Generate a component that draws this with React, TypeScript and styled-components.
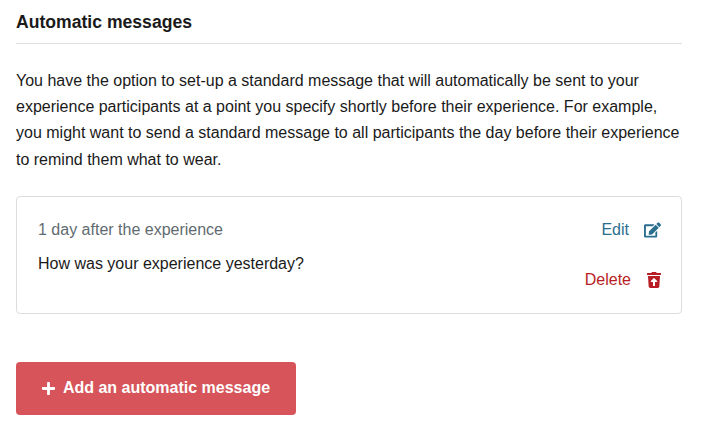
import React from "react";
import styled, { createGlobalStyle } from "styled-components";
import { FaEdit, FaTrashRestore, FaPlus } from "react-icons/fa";

const Global = createGlobalStyle`
  html, body { margin: 0; padding: 0; background: #fff; }
  body { font-family: "Liberation Sans", Arial, sans-serif; color: #1a1a1a; }
`;

const Page = styled.div`
  width: 666px;
  padding: 11px 20px 15px 16px;
`;

const Heading = styled.h2`
  margin: 0;
  padding-bottom: 10px;
  border-bottom: 1px solid #e0e0e0;
  font-size: 17.6px;
  line-height: 22px;
  font-weight: 700;
  color: #1a1a1a;
`;

const Intro = styled.p`
  margin: 23.5px 0 0;
  font-size: 16px;
  line-height: 26.4px;
  color: #1a1a1a;
`;

const Card = styled.div`
  margin-top: 22.5px;
  height: 118px;
  box-sizing: border-box;
  border: 1px solid #dcdcdc;
  border-radius: 4px;
  padding: 22px 20px 0 21px;
  display: flex;
  justify-content: space-between;
`;

const Body = styled.div`
  display: flex;
  flex-direction: column;
  gap: 12px;
  font-size: 16px;
  line-height: 22px;
`;

const Timing = styled.div`
  color: #5f6b70;
`;

const Actions = styled.div`
  display: flex;
  flex-direction: column;
  align-items: flex-end;
  gap: 28px;
`;

const Action = styled.a<{ $color: string }>`
  display: flex;
  align-items: center;
  gap: 16px;
  font-size: 16px;
  line-height: 22px;
  color: ${(p) => p.$color};
`;

const EditIcon = styled(FaEdit)`
  display: block;
  width: 17px;
  height: 16px;
  margin-left: -1px;
`;

const TrashIcon = styled(FaTrashRestore)`
  display: block;
  width: 14px;
  height: 16px;
`;

const PlusIcon = styled(FaPlus)`
  width: 15px;
  height: 15px;
  margin-left: -1px;
`;

const AddButton = styled.button`
  margin-top: 48px;
  width: 280px;
  height: 53px;
  border: 0;
  border-radius: 4px;
  background: #d6545a;
  color: #fff;
  font-family: inherit;
  font-size: 16px;
  font-weight: 700;
  display: flex;
  align-items: center;
  justify-content: center;
  gap: 7px;
`;

export default function App() {
  return (
    <Page>
      <Global />
      <Heading>Automatic messages</Heading>
      <Intro>
        You have the option to set-up a standard message that will automatically be sent to your
        experience participants at a point you specify shortly before their experience. For example,
        you might want to send a standard message to all participants the day before their experience
        to remind them what to wear.
      </Intro>
      <Card>
        <Body>
          <Timing>1 day after the experience</Timing>
          <div>How was your experience yesterday?</div>
        </Body>
        <Actions>
          <Action $color="#2b6f8f">
            Edit <EditIcon />
          </Action>
          <Action $color="#b81c24">
            Delete <TrashIcon />
          </Action>
        </Actions>
      </Card>
      <AddButton>
        <PlusIcon /> Add an automatic message
      </AddButton>
    </Page>
  );
}
